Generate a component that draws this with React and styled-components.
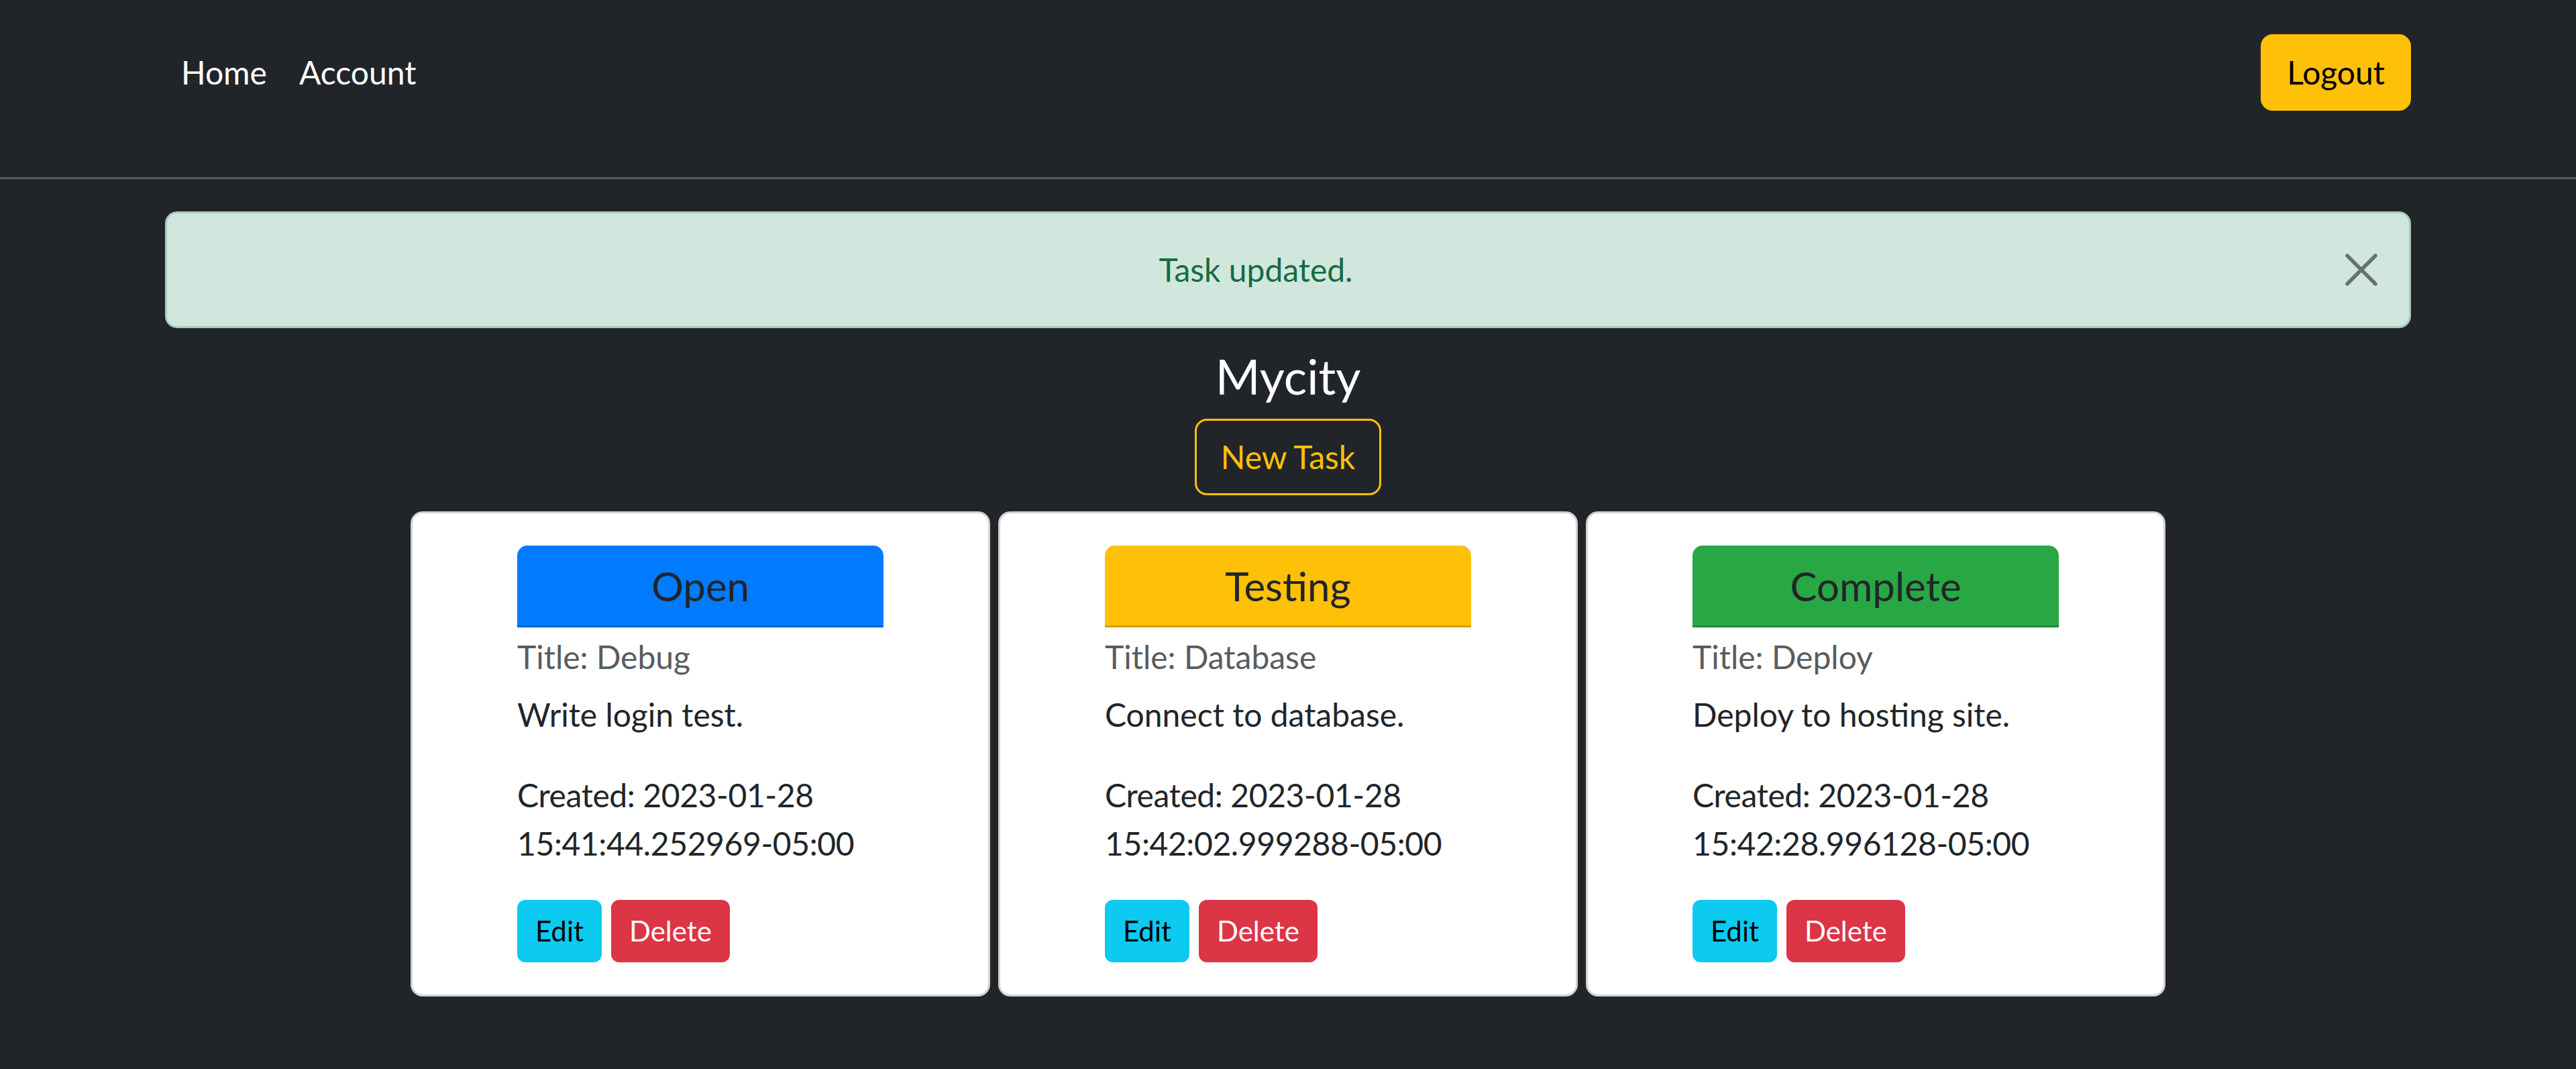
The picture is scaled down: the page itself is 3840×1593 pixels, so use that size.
import styled, { createGlobalStyle } from 'styled-components';

const GlobalStyle = createGlobalStyle`
  html, body {
    margin: 0;
    background-color: #212529;
    font-family: Lato, "Open Sans", "Liberation Sans", sans-serif;
    font-size: 48px;
    line-height: 72px;
    color: #212529;
  }
  * {
    box-sizing: border-box;
  }
`;

const Page = styled.div`
  min-height: 100vh;
  background-color: #212529;
`;

const Navbar = styled.nav`
  height: 267px;
  padding-top: 51px;
  border-bottom: 3px solid #595c5f;
`;

const NavInner = styled.div`
  width: 3420px;
  margin: 0 auto;
  padding: 0 36px;
  display: flex;
  align-items: center;
  justify-content: space-between;
`;

const NavLinks = styled.div`
  display: flex;
`;

const NavLink = styled.a`
  padding: 0 24px;
  color: #fff;
  text-decoration: none;
  cursor: pointer;
`;

const LogoutButton = styled.button`
  font: inherit;
  line-height: 72px;
  padding: 18px 36px;
  border: 3px solid #ffc107;
  border-radius: 18px;
  background-color: #ffc107;
  color: #000;
  cursor: pointer;
`;

const Main = styled.main`
  width: 3420px;
  margin: 0 auto;
  padding: 48px 36px;
  display: flex;
  flex-direction: column;
  align-items: center;
`;

const Alert = styled.div`
  position: relative;
  width: 100%;
  padding: 48px 144px 48px 48px;
  border: 3px solid #a3cfbb;
  border-radius: 18px;
  background-color: #d1e7dd;
  color: #146c43;
  text-align: center;
`;

const CloseButton = styled.button`
  position: absolute;
  top: 60px;
  right: 47px;
  width: 48px;
  height: 48px;
  padding: 0;
  border: none;
  background: none;
  opacity: 0.5;
  cursor: pointer;
  display: flex;
`;

const Heading = styled.h4`
  margin: 28px 0 21px;
  font-size: 72px;
  font-weight: 400;
  line-height: 86px;
  color: #fff;
`;

const OutlineButton = styled.button`
  font: inherit;
  line-height: 72px;
  padding: 18px 36px;
  border: 3px solid #ffc107;
  border-radius: 18px;
  background: transparent;
  color: #ffc107;
  cursor: pointer;
`;

const CardRow = styled.div`
  margin-top: 24px;
  display: flex;
  justify-content: center;
  gap: 12px;
`;

const Card = styled.div`
  width: 864px;
  padding: 48px;
  border: 3px solid #d2d2d2;
  border-radius: 18px;
  background-color: #fff;
`;

const CardInner = styled.div`
  width: 546px;
  margin: 0 auto;
`;

const StatusHeader = styled.div`
  padding: 24px 0 23px;
  border-bottom: 3px solid rgba(0, 0, 0, 0.175);
  border-radius: 15px 15px 0 0;
  background-color: ${(p) => p.color};
  color: #212529;
  font-size: 60px;
  line-height: 72px;
  text-align: center;
`;

const TaskTitle = styled.div`
  margin: 15px 0 21px;
  line-height: 58px;
  color: #595c5f;
`;

const Text = styled.p`
  margin: 0 0 48px;
`;

const Timestamp = styled.span`
  letter-spacing: -0.4px;
`;

const Actions = styled.div`
  display: flex;
  gap: 14px;
`;

const SmallButton = styled.button`
  font: inherit;
  font-size: 42px;
  line-height: 63px;
  padding: 12px 24px;
  border: 3px solid ${(p) => p.bg};
  border-radius: 12px;
  background-color: ${(p) => p.bg};
  color: ${(p) => p.fg};
  cursor: pointer;
`;

const tasks = [
  {
    status: 'Open',
    color: '#007bff',
    title: 'Debug',
    description: 'Write login test.',
    created: ['2023-01-28', '15:41:44.252969-05:00'],
  },
  {
    status: 'Testing',
    color: '#ffc107',
    title: 'Database',
    description: 'Connect to database.',
    created: ['2023-01-28', '15:42:02.999288-05:00'],
  },
  {
    status: 'Complete',
    color: '#28a745',
    title: 'Deploy',
    description: 'Deploy to hosting site.',
    created: ['2023-01-28', '15:42:28.996128-05:00'],
  },
];

const App = () => {
  return (
    <Page>
      <GlobalStyle />
      <Navbar>
        <NavInner>
          <NavLinks>
            <NavLink>Home</NavLink>
            <NavLink>Account</NavLink>
          </NavLinks>
          <LogoutButton>Logout</LogoutButton>
        </NavInner>
      </Navbar>

      <Main>
        <Alert>
          Task updated.
          <CloseButton aria-label="Close">
            <svg width="48" height="48" viewBox="0 0 48 48">
              <path
                d="M3 3 L45 45 M45 3 L3 45"
                stroke="#000"
                strokeWidth="5.5"
                strokeLinecap="round"
              />
            </svg>
          </CloseButton>
        </Alert>

        <Heading>Mycity</Heading>
        <OutlineButton>New Task</OutlineButton>

        <CardRow>
          {tasks.map((task) => (
            <Card key={task.title}>
              <CardInner>
                <StatusHeader color={task.color}>{task.status}</StatusHeader>
                <TaskTitle>Title: {task.title}</TaskTitle>
                <Text>{task.description}</Text>
                <Text>
                  <Timestamp>Created: {task.created[0]}</Timestamp>
                  <br />
                  <Timestamp>{task.created[1]}</Timestamp>
                </Text>
                <Actions>
                  <SmallButton bg="#0dcaf0" fg="#000">
                    Edit
                  </SmallButton>
                  <SmallButton bg="#dc3545" fg="#fff">
                    Delete
                  </SmallButton>
                </Actions>
              </CardInner>
            </Card>
          ))}
        </CardRow>
      </Main>
    </Page>
  );
};

export default App;
